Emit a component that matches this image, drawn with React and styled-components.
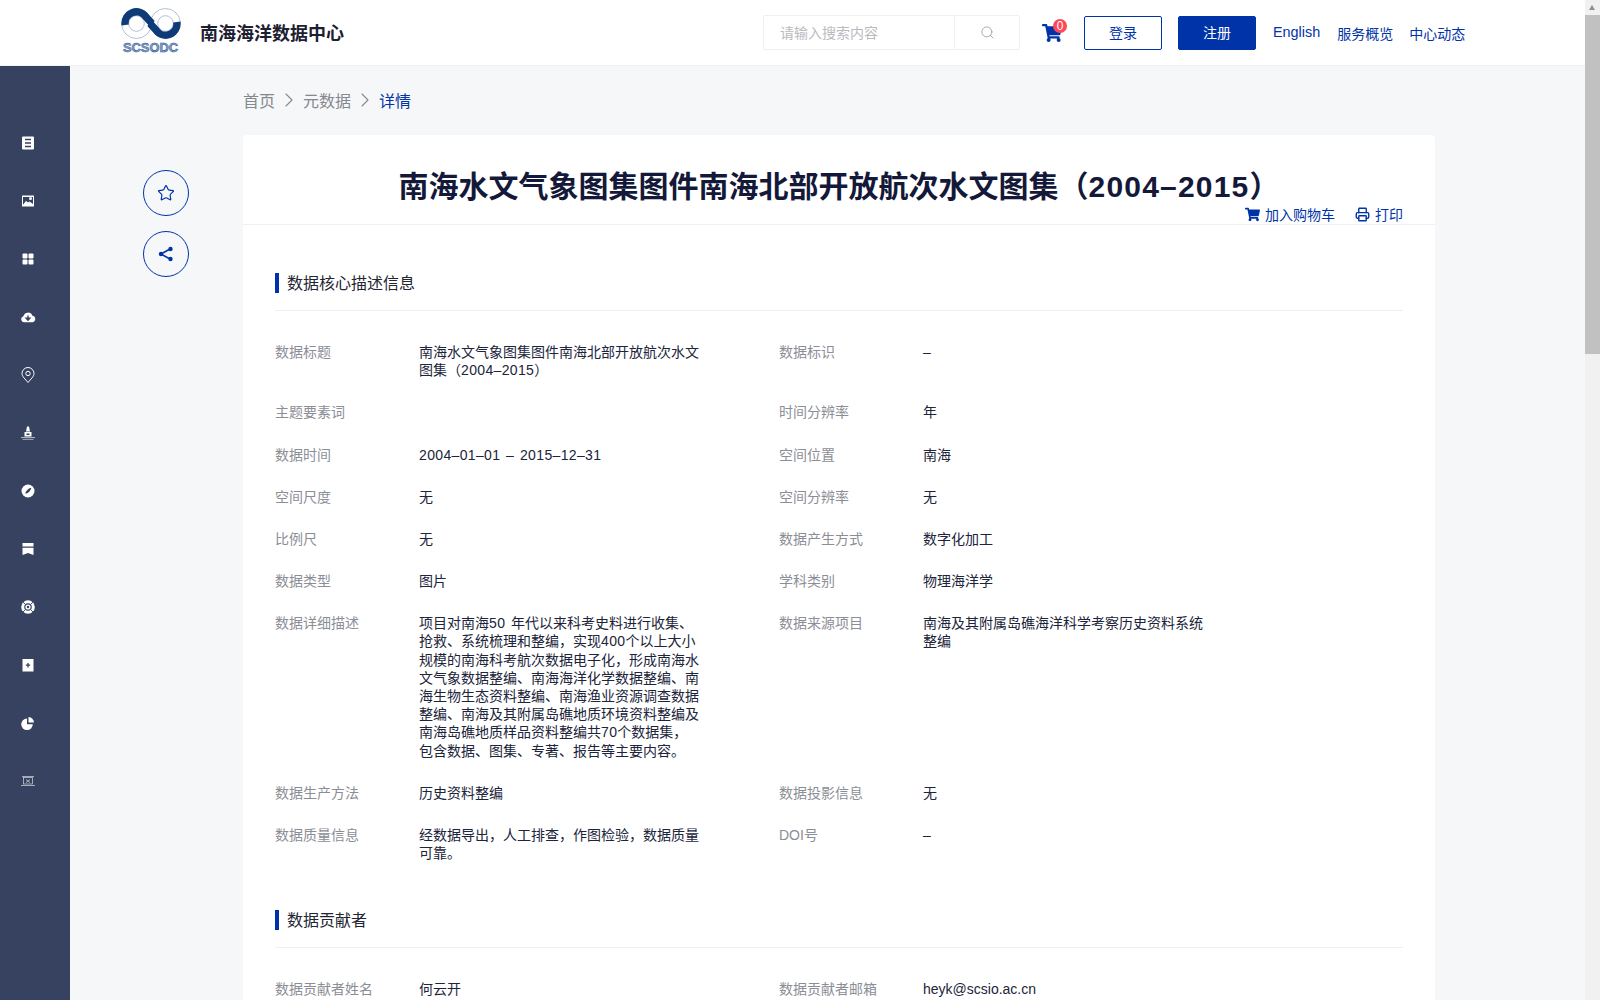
import React from 'react';
import styled, { createGlobalStyle } from 'styled-components';
import { Search, ChevronRight, Star, Printer } from 'lucide-react';
import { FaShoppingCart } from 'react-icons/fa';

const BLUE = '#0033a8';
const NAVY = '#36425f';

const GlobalStyle = createGlobalStyle`
  html, body {
    margin: 0;
    padding: 0;
    background: #f6f7f9;
    font-family: "Liberation Sans", "Noto Sans CJK SC", sans-serif;
  }
  * { box-sizing: border-box; }
`;

const Header = styled.header`
  height: 66px;
  background: #fff;
  border-bottom: 1px solid #f0f1f4;
  display: flex;
  align-items: center;
  padding-left: 121px;
`;

const SiteName = styled.div`
  margin: -2px 0 0 19px;
  font-size: 18px;
  font-weight: 700;
  color: #1c2030;
`;

const HeaderRight = styled.div`
  margin-left: 419px;
  display: flex;
  align-items: center;
`;

const SearchBox = styled.div`
  width: 257px;
  height: 35px;
  border: 1px solid #eeeff1;
  border-radius: 2px;
  display: flex;
  align-items: stretch;
`;

const SearchText = styled.div`
  width: 191px;
  padding-left: 16px;
  font-size: 14px;
  line-height: 35px;
  color: #b9bbc0;
  border-right: 1px solid #eeeff1;
`;

const SearchIcon = styled.div`
  flex: 1;
  display: flex;
  align-items: center;
  justify-content: center;
  color: #8d9096;
`;

const CartLink = styled.div`
  position: relative;
  margin-left: 22px;
  width: 20px;
  height: 20px;
  color: ${BLUE};
  display: flex;
  align-items: center;
`;

const Badge = styled.span`
  position: absolute;
  top: -4px;
  left: 11px;
  width: 14px;
  height: 14px;
  border-radius: 50%;
  background: #ff4757;
  color: #fff;
  font-size: 12px;
  line-height: 14px;
  text-align: center;
`;

const AuthButton = styled.button`
  width: 78px;
  height: 34px;
  margin-left: ${(p) => p.$gap}px;
  border: 1px solid ${BLUE};
  border-radius: 2px;
  background: ${(p) => (p.$solid ? BLUE : '#fff')};
  color: ${(p) => (p.$solid ? '#fff' : BLUE)};
  font-family: inherit;
  font-size: 14px;
  padding: 0 0 2px;
`;

const NavLink = styled.a`
  margin-left: ${(p) => p.$gap}px;
  color: ${BLUE};
  font-size: ${(p) => p.$size || 14}px;
  margin-top: ${(p) => (p.$size ? -2 : 0)}px;
`;

const Body = styled.div`
  display: flex;
`;

const Sidebar = styled.nav`
  width: 70px;
  flex-shrink: 0;
  background: ${NAVY};
  padding: 48px 14px 0 0;
`;

const SideItem = styled.div`
  height: 58px;
  display: flex;
  align-items: center;
  justify-content: center;
  color: #fff;
`;

const Main = styled.main`
  flex: 1;
  display: flex;
  padding-left: 73px;
`;

const FloatColumn = styled.div`
  width: 46px;
  padding-top: 104px;
  display: flex;
  flex-direction: column;
  gap: 15px;
`;

const RoundButton = styled.div`
  width: 46px;
  height: 46px;
  border: 1px solid ${BLUE};
  border-radius: 50%;
  display: flex;
  align-items: center;
  justify-content: center;
  color: ${BLUE};
`;

const Content = styled.div`
  width: 1192px;
  margin-left: 54px;
`;

const Breadcrumb = styled.div`
  height: 69px;
  padding-bottom: 2px;
  display: flex;
  align-items: center;
  gap: 2px;
  font-size: 16px;
  color: #85888f;
`;

const CrumbIcon = styled(ChevronRight)`
  color: #85888f;
`;

const CrumbCurrent = styled.span`
  color: ${BLUE};
`;

const Card = styled.div`
  background: #fff;
  border-radius: 4px;
  min-height: 2200px;
`;

const CardHead = styled.div`
  position: relative;
  height: 90px;
  border-bottom: 1px solid #eeeff2;
  padding-top: 32px;
`;

const Title = styled.h1`
  margin: 0;
  font-size: 30px;
  line-height: 40px;
  font-weight: 700;
  color: #14193a;
  text-align: center;
`;

const TitleYear = styled.span`
  letter-spacing: 1.2px;
`;

const HeadActions = styled.div`
  position: absolute;
  right: 32px;
  bottom: 0;
  display: flex;
  align-items: center;
  gap: 20px;
  color: ${BLUE};
  font-size: 14px;
`;

const HeadAction = styled.span`
  display: flex;
  align-items: center;
  gap: 5px;
`;

const CardBody = styled.div`
  padding: 0 32px;
`;

const SectionTitle = styled.h2`
  margin: 48px 0 32px;
  padding-bottom: 17px;
  border-bottom: 1px solid #eeeff2;
  font-size: 16px;
  font-weight: 400;
  color: #222632;
  display: flex;
`;

const SectionMark = styled.span`
  border-left: 4px solid ${BLUE};
  padding-left: 8px;
  height: 20px;
  line-height: 22px;
`;

const FieldGrid = styled.div`
  display: grid;
  grid-template-columns: 504px 1fr;
  row-gap: 23.8px;

  /* the date row sits a pixel lower */
  > :nth-child(5), > :nth-child(6) {
    padding-top: 1px;
  }
`;

const Field = styled.div`
  display: flex;
  font-size: 14px;
  line-height: 18.2px;
`;

const Label = styled.div`
  width: 144px;
  flex-shrink: 0;
  color: #8b8e96;
`;

const Value = styled.div`
  width: 281px;
  color: #20243a;
`;

const Latin = styled.span`
  letter-spacing: 0.35px;
  word-spacing: 1.5px;
`;

const LogoText = styled.text`
  font-family: "Liberation Sans", sans-serif;
  font-size: 12.5px;
  font-weight: 700;
  fill: #8ea5c8;
  stroke: #1f4d8e;
  stroke-width: 0.5;
`;

const ScrollTrack = styled.div`
  position: fixed;
  top: 0;
  right: 0;
  width: 15px;
  height: 100vh;
  background: #f1f1f1;
`;

const ScrollArrow = styled.div`
  position: absolute;
  left: 4px;
  top: 5px;
  border-left: 3.5px solid transparent;
  border-right: 3.5px solid transparent;
  border-bottom: 5px solid #8f8f8f;
`;

const ScrollThumb = styled.div`
  position: absolute;
  top: 15px;
  left: 0;
  width: 15px;
  height: 339px;
  background: #c1c1c1;
`;

function Logo() {
  return (
    <svg width="60" height="50" viewBox="0 0 60 50" fill="none">
      <circle cx="15.500" cy="15.500" r="15" stroke="#9db0cf" strokeWidth="0.8" />
      <circle cx="15.500" cy="15.500" r="7.800" stroke="#9db0cf" strokeWidth="0.8" />
      <circle cx="44.500" cy="15.500" r="15" stroke="#9db0cf" strokeWidth="0.8" />
      <circle cx="44.500" cy="15.500" r="7.800" stroke="#9db0cf" strokeWidth="0.8" />
      <path d="M4.200 17A11.400 11.400 0 0 1 25 9L31 15.500" stroke="#0e3a78" strokeWidth="7.400" />
      <path d="M55.800 14A11.400 11.400 0 0 1 35 22L29 15.500" stroke="#0e3a78" strokeWidth="7.400" />
      <LogoText x="2" y="44" textLength="55" lengthAdjust="spacingAndGlyphs">SCSODC</LogoText>
    </svg>
  );
}

const sideIcons = [
  <g key="doc">
    <rect x="2" y="1.500" width="12" height="13" rx="1" fill="currentColor" />
    <path d="M5 4.500h6M5 8h6M5 11.500h6" stroke={NAVY} strokeWidth="1.400" />
  </g>,
  <g key="image">
    <rect x="2" y="2.500" width="12" height="11" fill="currentColor" />
    <path d="M3 12l3-4 2 1.500 1.500-1 3.500 2.500v-7H3z" fill={NAVY} />
    <circle cx="10.500" cy="5.600" r="1.500" fill="currentColor" />
    <path d="M3 12l3-3.600 2.500 2 1.500-1 3 2.600z" fill="currentColor" />
  </g>,
  <g key="grid" fill="currentColor">
    <rect x="2.500" y="2.500" width="5" height="5" rx="1" />
    <rect x="8.500" y="2.500" width="5" height="5" rx="1" />
    <rect x="2.500" y="8.500" width="5" height="5" rx="1" />
    <rect x="8.500" y="8.500" width="5" height="5" rx="1" />
  </g>,
  <g key="cloud">
    <path d="M4 13.200a3 3 0 0 1-.6-5.900 4.700 4.700 0 0 1 9-.6 3.300 3.300 0 0 1 .2 6.500z" fill="currentColor" />
    <path d="M8 6.500v3.400M6.200 9.200L8 11.200l1.800-2z" stroke={NAVY} strokeWidth="1.400" fill="none" />
  </g>,
  <g key="pin" fill="none" stroke="currentColor" strokeWidth="1">
    <path d="M8 15.500C5.200 12 2 9.600 2 6.500a6 6 0 0 1 12 0c0 3.100-3.200 5.500-6 9z" />
    <circle cx="8" cy="6.500" r="2.200" />
  </g>,
  <g key="buoy">
    <path d="M7 1.500h2l1 5H6z" fill="currentColor" />
    <rect x="4.500" y="7" width="7" height="4.500" fill="currentColor" />
    <rect x="6.500" y="8.500" width="3" height="1.500" fill={NAVY} />
    <path d="M1 12.500h14M2.500 14.300h11" stroke="currentColor" strokeWidth="0.6" />
  </g>,
  <g key="compass">
    <circle cx="8" cy="8" r="6.500" fill="currentColor" />
    <path d="M11.300 4.700c-2.600.5-4.800 2.200-6 5.300l.7.7c3.100-1.200 4.800-3.400 5.300-6z" fill={NAVY} />
  </g>,
  <g key="ribbon" fill="currentColor">
    <rect x="2.500" y="2" width="11" height="3.500" />
    <path d="M2.500 6.700h11V14L8 12 2.500 14z" />
  </g>,
  <g key="ring">
    <circle cx="8" cy="8" r="6.800" fill="currentColor" />
    <circle cx="8" cy="8" r="3.800" fill={NAVY} />
    <circle cx="8" cy="8" r="2.600" fill="currentColor" />
    <circle cx="8" cy="8" r="1.200" fill={NAVY} />
    <path d="M3 3l2 2M13 3l-2 2M3 13l2-2M13 13l-2-2" stroke={NAVY} strokeWidth="0.9" />
  </g>,
  <g key="plus">
    <rect x="2.500" y="2" width="11" height="12.500" fill="currentColor" />
    <path d="M8 6v4.400M5.800 8.200h4.400" stroke={NAVY} strokeWidth="1.300" />
  </g>,
  <g key="pie" fill="currentColor">
    <path d="M7 3.500a5.800 5.800 0 1 0 5.800 5.800H7z" />
    <path d="M8.500 2v5.500H14A5.600 5.600 0 0 0 8.500 2z" />
  </g>,
  <g key="screen" fill="none" stroke="currentColor" strokeWidth="0.7" opacity="0.8">
    <rect x="3.500" y="4.500" width="9" height="6.500" />
    <path d="M6 6.500l4 3M10 6.500l-4 3M1 12.500h14M2 3.500h12" />
  </g>,
];

const coreFields = [
  ['数据标题', '南海水文气象图集图件南海北部开放航次水文图集（2004–2015）'],
  ['数据标识', '–'],
  ['主题要素词', ''],
  ['时间分辨率', '年'],
  ['数据时间', '2004–01–01 – 2015–12–31'],
  ['空间位置', '南海'],
  ['空间尺度', '无'],
  ['空间分辨率', '无'],
  ['比例尺', '无'],
  ['数据产生方式', '数字化加工'],
  ['数据类型', '图片'],
  ['学科类别', '物理海洋学'],
  ['数据详细描述', '项目对南海50 年代以来科考史料进行收集、抢救、系统梳理和整编，实现400个以上大小规模的南海科考航次数据电子化，形成南海水文气象数据整编、南海海洋化学数据整编、南海生物生态资料整编、南海渔业资源调查数据整编、南海及其附属岛礁地质环境资料整编及南海岛礁地质样品资料整编共70个数据集，包含数据、图集、专著、报告等主要内容。'],
  ['数据来源项目', '南海及其附属岛礁海洋科学考察历史资料系统整编'],
  ['数据生产方法', '历史资料整编'],
  ['数据投影信息', '无'],
  ['数据质量信息', '经数据导出，人工排查，作图检验，数据质量可靠。'],
  ['DOI号', '–'],
];

const contributorFields = [
  ['数据贡献者姓名', '何云开'],
  ['数据贡献者邮箱', 'heyk@scsio.ac.cn'],
];

// digits and dashes run a little wider than the CJK text around them
const spaceLatin = (text) =>
  text.split(/([0-9–][0-9– ]*)/).map((part, i) => (i % 2 ? <Latin key={i}>{part}</Latin> : part));

function Fields({ items }) {
  return (
    <FieldGrid>
      {items.map(([label, value]) => (
        <Field key={label}>
          <Label>{label}</Label>
          <Value>{spaceLatin(value)}</Value>
        </Field>
      ))}
    </FieldGrid>
  );
}

export default function App() {
  return (
    <>
      <GlobalStyle />
      <Header>
        <Logo />
        <SiteName>南海海洋数据中心</SiteName>
        <HeaderRight>
          <SearchBox>
            <SearchText>请输入搜索内容</SearchText>
            <SearchIcon><Search size={15} strokeWidth={1.2} /></SearchIcon>
          </SearchBox>
          <CartLink>
            <FaShoppingCart size={20} />
            <Badge>0</Badge>
          </CartLink>
          <AuthButton $gap={22}>登录</AuthButton>
          <AuthButton $gap={16} $solid>注册</AuthButton>
          <NavLink $gap={17} $size={14.4}>English</NavLink>
          <NavLink $gap={17}>服务概览</NavLink>
          <NavLink $gap={16}>中心动态</NavLink>
        </HeaderRight>
      </Header>
      <Body>
        <Sidebar>
          {sideIcons.map((icon) => (
            <SideItem key={icon.key}>
              <svg width="16" height="16" viewBox="0 0 16 16">{icon}</svg>
            </SideItem>
          ))}
        </Sidebar>
        <Main>
          <FloatColumn>
            <RoundButton><Star size={18} strokeWidth={1.6} /></RoundButton>
            <RoundButton>
              <svg width="18" height="18" viewBox="0 0 18 18" fill="currentColor" stroke="currentColor">
                <path d="M4 9l9-5M4 9l9 5" strokeWidth="1.500" fill="none" />
                <circle cx="4" cy="9" r="2.200" stroke="none" />
                <circle cx="13.500" cy="4" r="2.200" stroke="none" />
                <circle cx="13.500" cy="14" r="2.200" stroke="none" />
              </svg>
            </RoundButton>
          </FloatColumn>
          <Content>
            <Breadcrumb>
              <span>首页</span>
              <CrumbIcon size={24} strokeWidth={1.1} />
              <span>元数据</span>
              <CrumbIcon size={24} strokeWidth={1.1} />
              <CrumbCurrent>详情</CrumbCurrent>
            </Breadcrumb>
            <Card>
              <CardHead>
                <Title>南海水文气象图集图件南海北部开放航次水文图集（<TitleYear>2004–2015</TitleYear>）</Title>
                <HeadActions>
                  <HeadAction><FaShoppingCart size={15} />加入购物车</HeadAction>
                  <HeadAction><Printer size={15} strokeWidth={2.2} />打印</HeadAction>
                </HeadActions>
              </CardHead>
              <CardBody>
                <SectionTitle><SectionMark>数据核心描述信息</SectionMark></SectionTitle>
                <Fields items={coreFields} />
                <SectionTitle><SectionMark>数据贡献者</SectionMark></SectionTitle>
                <Fields items={contributorFields} />
              </CardBody>
            </Card>
          </Content>
        </Main>
      </Body>
      <ScrollTrack>
        <ScrollArrow />
        <ScrollThumb />
      </ScrollTrack>
    </>
  );
}
